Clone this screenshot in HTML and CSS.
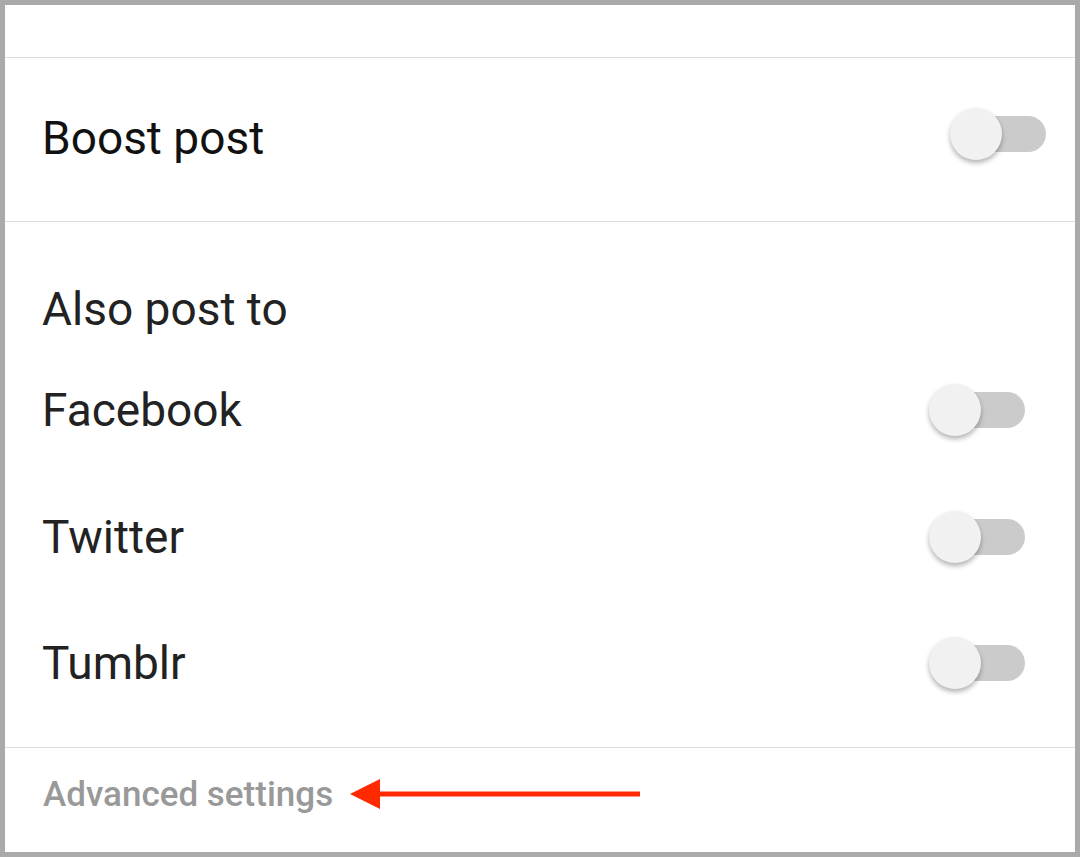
FILE: index.html
```html
<!DOCTYPE html>
<html lang="en">
<head>
    <meta charset="UTF-8">
    <meta name="viewport" content="width=device-width, initial-scale=1.0">
    <title>Post settings</title>
    <link rel="stylesheet" href="styles.css">
</head>
<body>
    <div class="settings-frame">
        <div class="top-spacer"></div>

        <div class="setting-row boost-row">
            <span class="setting-label label-dark">Boost post</span>
            <label class="switch switch-raised">
                <span class="track"></span>
                <span class="thumb"></span>
            </label>
        </div>

        <div class="share-section">
            <div class="section-title">Also post to</div>

            <div class="setting-row share-row">
                <span class="setting-label">Facebook</span>
                <label class="switch">
                    <span class="track"></span>
                    <span class="thumb"></span>
                </label>
            </div>

            <div class="setting-row share-row">
                <span class="setting-label">Twitter</span>
                <label class="switch">
                    <span class="track"></span>
                    <span class="thumb"></span>
                </label>
            </div>

            <div class="setting-row share-row">
                <span class="setting-label">Tumblr</span>
                <label class="switch">
                    <span class="track"></span>
                    <span class="thumb"></span>
                </label>
            </div>
        </div>

        <div class="advanced">
            <a href="#" class="advanced-link">Advanced settings</a>
            <svg class="pointer-arrow" width="292" height="32" viewBox="0 0 292 32">
                <polygon points="0,16 30,1 30,31" fill="#ff2a00"/>
                <rect x="28" y="13.5" width="262" height="5" fill="#ff2a00"/>
            </svg>
        </div>
    </div>
</body>
</html>
```

FILE: styles.css
```css
* {
    box-sizing: border-box;
}

body {
    margin: 0;
    padding: 0;
    font-family: Roboto, 'Noto Sans', sans-serif;
    background-color: #fff;
}

.settings-frame {
    width: 1080px;
    height: 857px;
    border: 5px solid #aaa;
    background-color: #fff;
    display: flex;
    flex-direction: column;
}

.top-spacer {
    height: 53px;
    border-bottom: 1px solid #dcdcdc;
}

.setting-row {
    display: flex;
    align-items: center;
    justify-content: space-between;
    padding-left: 37px;
}

.boost-row {
    height: 164px;
    padding-right: 29px;
    padding-bottom: 4px;
    border-bottom: 1px solid #dcdcdc;
}

.setting-label {
    font-size: 46px;
    color: #222;
}

.label-dark {
    color: #111;
}

.share-section {
    height: 526px;
    border-bottom: 1px solid #dcdcdc;
    padding-top: 61px;
}

.section-title {
    height: 52px;
    line-height: 52px;
    padding-left: 37px;
    margin-bottom: 12px;
    font-size: 46px;
    color: #222;
}

.share-row {
    height: 126.5px;
    padding-right: 50px;
}

.switch {
    position: relative;
    width: 96px;
    height: 52px;
    cursor: pointer;
}

.switch-raised {
    margin-bottom: 8px;
}

.track {
    position: absolute;
    left: 8px;
    top: 8px;
    width: 88px;
    height: 36px;
    border-radius: 18px;
    background-color: #cbcbcb;
}

.thumb {
    position: absolute;
    left: 0;
    top: 0;
    width: 52px;
    height: 52px;
    border-radius: 50%;
    background-color: #f1f1f1;
    box-shadow: 0 3px 5px rgba(0, 0, 0, 0.3);
}

.advanced {
    flex: 1;
    display: flex;
    align-items: center;
    padding-left: 38px;
    padding-bottom: 12px;
}

.advanced-link {
    font-size: 35px;
    font-weight: 500;
    color: #999;
    text-decoration: none;
}

.pointer-arrow {
    margin-left: 17px;
}
```
